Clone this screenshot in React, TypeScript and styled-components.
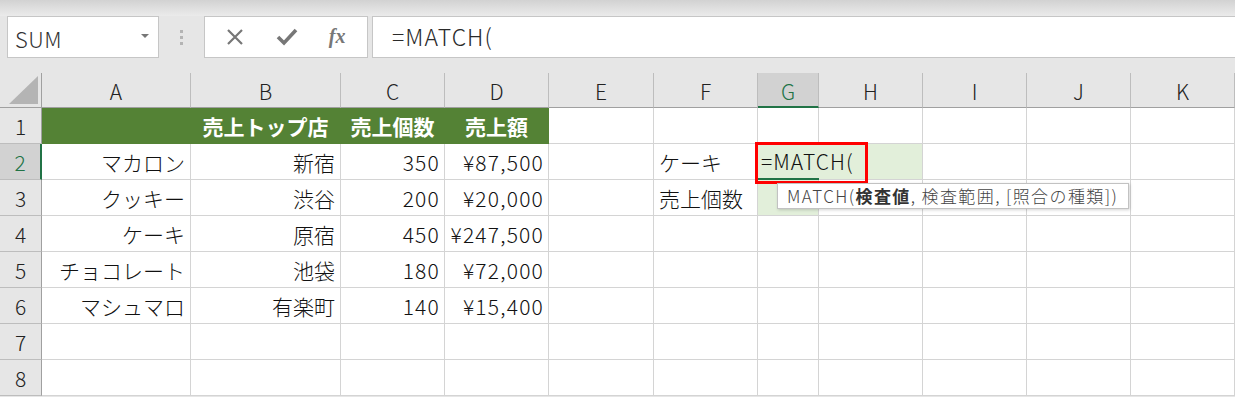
import styled, { createGlobalStyle } from "styled-components";

const GlobalStyle = createGlobalStyle`
  html, body {
    margin: 0;
    padding: 0;
    background: #e6e6e6;
  }
  body {
    font-family: "Noto Sans CJK JP", "Noto Sans", sans-serif;
    font-weight: 300;
    overflow: hidden;
  }
  * { box-sizing: border-box; }
`;

const Page = styled.div`
  width: 1235px;
  height: 397px;
  background: #e6e6e6;
  overflow: hidden;
`;

const RibbonEdge = styled.div`
  height: 16px;
  background: linear-gradient(#d2d2d2, #ebebeb);
`;

const Toolbar = styled.div`
  display: flex;
  align-items: stretch;
  height: 42px;
  padding-left: 7px;
  margin-bottom: 15px;
`;

const NameBox = styled.div`
  width: 152px;
  display: flex;
  align-items: center;
  justify-content: space-between;
  padding: 2px 9px 0 7px;
  background: #fff;
  border: 1px solid #c6c6c6;
  font-size: 22px;
  letter-spacing: 0.5px;
  color: #333;
`;

const DropArrow = styled.span`
  width: 0;
  height: 0;
  border-left: 4px solid transparent;
  border-right: 4px solid transparent;
  border-top: 4px solid #777;
  margin-top: -4px;
`;

const Grip = styled.div`
  width: 45px;
  display: flex;
  flex-direction: column;
  align-items: center;
  justify-content: center;
  gap: 3px;
`;

const GripDot = styled.span`
  width: 3px;
  height: 3px;
  background: #b4b4b4;
`;

const FxBox = styled.div`
  width: 164px;
  display: flex;
  align-items: center;
  justify-content: space-around;
  padding: 0 6px 0 4px;
  background: #fff;
  border: 1px solid #c6c6c6;
  color: #777;
`;

const FxLabel = styled.span`
  font-family: "Liberation Serif", "DejaVu Serif", serif;
  font-style: italic;
  font-weight: bold;
  font-size: 20px;
  color: #777;
  margin-top: -2px;
`;

const FormulaInput = styled.div`
  flex: 1;
  margin-left: 4px;
  display: flex;
  align-items: center;
  padding: 0 0 2px 19px;
  background: #fff;
  border: 1px solid #c6c6c6;
  border-right: none;
  font-size: 23px;
  letter-spacing: 1px;
  color: #2a2a2a;
`;

const Sheet = styled.div`
  display: grid;
  grid-template-columns: 42px 149px 150px 104px 104px 105px 104px 61px 104px 104px 104px 104px;
  grid-template-rows: 35px repeat(8, 36px);
  background: #fff;
`;

const Corner = styled.div`
  background: #e6e6e6;
  border-right: 1px solid #a0a0a0;
  border-bottom: 1px solid #a0a0a0;
  display: flex;
  align-items: flex-end;
  justify-content: flex-end;
  padding: 0 2px 2px 0;
`;

const ColHead = styled.div<{ $active?: boolean }>`
  display: flex;
  align-items: center;
  justify-content: center;
  padding-top: 2px;
  background: ${(p) => (p.$active ? "#d2d2d2" : "#e6e6e6")};
  border-right: 1px solid #bdbdbd;
  border-bottom: ${(p) => (p.$active ? "2px solid #217346" : "1px solid #a0a0a0")};
  font-size: 21px;
  color: ${(p) => (p.$active ? "#217346" : "#222")};
`;

const RowHead = styled.div<{ $active?: boolean }>`
  display: flex;
  align-items: center;
  justify-content: center;
  background: ${(p) => (p.$active ? "#d2d2d2" : "#e6e6e6")};
  border-bottom: 1px solid #bdbdbd;
  border-right: ${(p) => (p.$active ? "2px solid #217346" : "1px solid #a0a0a0")};
  font-size: 21px;
  color: ${(p) => (p.$active ? "#217346" : "#222")};
`;

const GREEN = "#548235";
const LIGHT = "#e2efda";

const Cell = styled.div<{
  $align?: "left" | "right" | "center";
  $fill?: string;
  $head?: boolean;
  $num?: boolean;
}>`
  display: flex;
  align-items: center;
  justify-content: ${(p) =>
    p.$align === "right" ? "flex-end" : p.$align === "center" ? "center" : "flex-start"};
  padding: 0 ${(p) => (p.$num ? "4px" : "5px")} 0 5px;
  white-space: nowrap;
  background: ${(p) => p.$fill || "#fff"};
  border-right: 1px solid ${(p) => (p.$fill === GREEN ? GREEN : "#d4d4d4")};
  border-bottom: 1px solid ${(p) => (p.$fill === GREEN ? GREEN : "#d4d4d4")};
  font-size: 21px;
  letter-spacing: ${(p) => (p.$num ? "1.2px" : "0")};
  font-weight: ${(p) => (p.$head ? 700 : 300)};
  color: ${(p) => (p.$head ? "#fff" : "#111")};
`;

const ActiveCell = styled.div`
  position: relative;
  display: flex;
  align-items: center;
  padding-left: 3px;
  white-space: nowrap;
  background: ${LIGHT};
  border-bottom: 2px solid #217346;
  font-size: 21px;
  letter-spacing: 1px;
  color: #111;
  z-index: 2;
`;

const Callout = styled.div`
  position: absolute;
  left: -3px;
  top: -2px;
  width: 113px;
  height: 42px;
  border: 3px solid #ff0000;
  pointer-events: none;
`;

const Tooltip = styled.div`
  position: absolute;
  left: 19px;
  top: 39px;
  height: 26px;
  display: flex;
  align-items: center;
  padding: 0 10px 1px 9px;
  background: #fff;
  border: 1px solid #c2c2c2;
  box-shadow: 1px 1px 3px rgba(0, 0, 0, 0.18);
  font-size: 17px;
  letter-spacing: 1.4px;
  color: #444;
  white-space: nowrap;
`;

const Bold = styled.b`
  font-weight: 700;
  color: #333;
`;

const columns = ["A", "B", "C", "D", "E", "F", "G", "H", "I", "J", "K"];

type CellDef = {
  text?: string;
  align?: "left" | "right" | "center";
  fill?: string;
  head?: boolean;
  num?: boolean;
};

const r = (text: string): CellDef => ({ text, align: "right" });
const n = (text: string): CellDef => ({ text, align: "right", num: true });
const l = (text: string): CellDef => ({ text, align: "left" });
const h = (text: string): CellDef => ({ text, align: "center", fill: GREEN, head: true });
const e: CellDef = {};

const rows: CellDef[][] = [
  [{ fill: GREEN }, h("売上トップ店"), h("売上個数"), h("売上額"), e, e, e, e, e, e, e],
  [r("マカロン"), r("新宿"), n("350"), n("¥87,500"), e, l("ケーキ"), e, { fill: LIGHT }, e, e, e],
  [r("クッキー"), r("渋谷"), n("200"), n("¥20,000"), e, l("売上個数"), { fill: LIGHT }, e, e, e, e],
  [r("ケーキ"), r("原宿"), n("450"), n("¥247,500"), e, e, e, e, e, e, e],
  [r("チョコレート"), r("池袋"), n("180"), n("¥72,000"), e, e, e, e, e, e, e],
  [r("マシュマロ"), r("有楽町"), n("140"), n("¥15,400"), e, e, e, e, e, e, e],
  [e, e, e, e, e, e, e, e, e, e, e],
  [e, e, e, e, e, e, e, e, e, e, e],
];

const App = () => {
  return (
    <Page>
      <GlobalStyle />
      <RibbonEdge />
      <Toolbar>
        <NameBox>
          SUM
          <DropArrow />
        </NameBox>
        <Grip>
          <GripDot />
          <GripDot />
          <GripDot />
        </Grip>
        <FxBox>
          <svg width="20" height="20" viewBox="0 0 20 20">
            <path d="M3 3 L17 17 M17 3 L3 17" stroke="#777" strokeWidth="2.2" fill="none" />
          </svg>
          <svg width="22" height="20" viewBox="0 0 22 20">
            <path d="M2 10 L8 16 L20 3" stroke="#777" strokeWidth="3.6" fill="none" />
          </svg>
          <FxLabel>fx</FxLabel>
        </FxBox>
        <FormulaInput>=MATCH(</FormulaInput>
      </Toolbar>
      <Sheet>
        <Corner>
          <svg width="30" height="29" viewBox="0 0 30 29">
            <polygon points="29,0 29,28 0,28" fill="#b4b4b4" />
          </svg>
        </Corner>
        {columns.map((c) => (
          <ColHead key={c} $active={c === "G"}>
            {c}
          </ColHead>
        ))}
        {rows.map((row, ri) => [
          <RowHead key={`h${ri}`} $active={ri === 1}>
            {ri + 1}
          </RowHead>,
          ...row.map((cell, ci) =>
            ri === 1 && ci === 6 ? (
              <ActiveCell key={`${ri}-${ci}`}>
                =MATCH(
                <Callout />
                <Tooltip>
                  MATCH(<Bold>検査値</Bold>, 検査範囲, [照合の種類])
                </Tooltip>
              </ActiveCell>
            ) : (
              <Cell
                key={`${ri}-${ci}`}
                $align={cell.align}
                $fill={cell.fill}
                $head={cell.head}
                $num={cell.num}
              >
                {cell.text}
              </Cell>
            )
          ),
        ])}
      </Sheet>
    </Page>
  );
};

export default App;
